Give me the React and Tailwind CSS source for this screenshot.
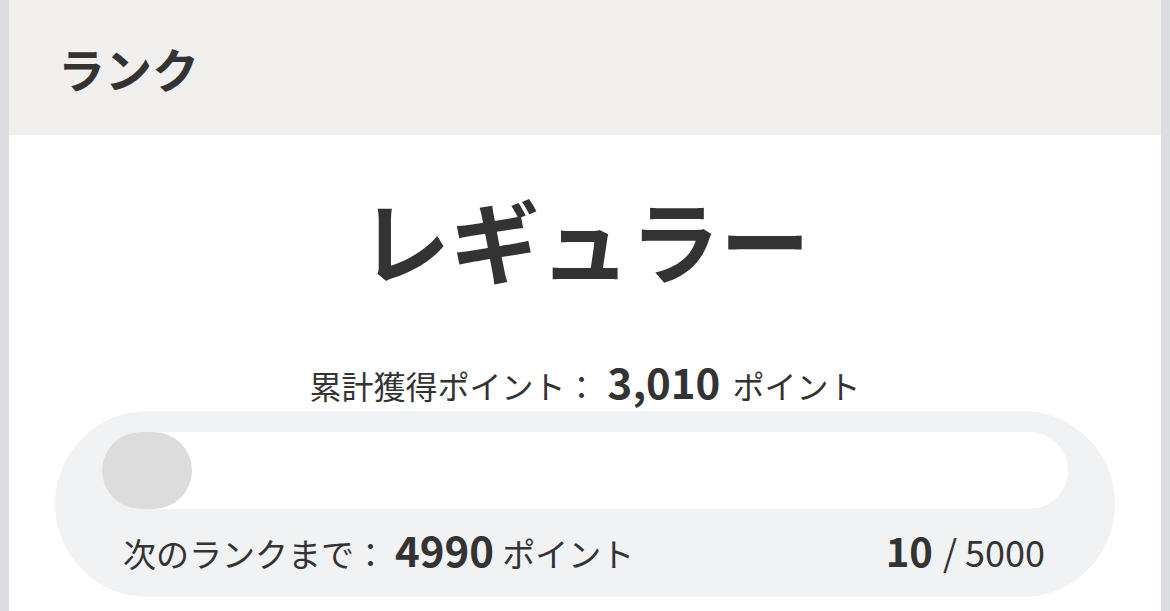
export default function App() {
  const total = 3010;
  const progress = 10;
  const goal = 5000;

  return (
    <div
      className="h-[611px] overflow-hidden bg-[#dcdde1] px-[9px] text-[#333333]"
      style={{ fontFamily: '"Noto Sans CJK JP", "Noto Sans", sans-serif' }}
    >
      <div className="h-full bg-white">
        {/* header */}
        <div className="flex h-[135px] items-center bg-[#f2f0ef] pl-[49px]">
          <h2 className="text-[47px] font-bold leading-none">ランク</h2>
        </div>

        {/* rank name */}
        <div className="pt-[58px] text-center text-[90px] font-bold leading-none">
          レギュラー
        </div>

        {/* total */}
        <div className="mt-[78px] flex items-baseline justify-center text-[32px] leading-[40px]">
          <span>累計獲得ポイント：</span>
          <span className="ml-[10px] text-[42px] font-bold">{total.toLocaleString()}</span>
          <span className="ml-[12px]">ポイント</span>
        </div>

        {/* progress */}
        <div className="mx-[46px] mt-[6px] rounded-full bg-[#f1f2f4] px-[47px] pb-[22px] pt-[21px]">
          <div className="h-[77px] rounded-full bg-white">
            <div
              className="h-full min-w-[90px] rounded-full bg-[#dcdcdc]"
              style={{ width: `${(progress / goal) * 100}%` }}
            />
          </div>
          <div className="mt-[18px] flex items-baseline justify-between pl-[21px] pr-[23px] leading-[44px]">
            <div className="flex items-baseline text-[33px]">
              <span>次のランクまで：</span>
              <span className="ml-[8px] text-[42px] font-bold">{goal - progress}</span>
              <span className="ml-[8px]">ポイント</span>
            </div>
            <div className="flex items-baseline text-[36px]">
              <span className="text-[40px] font-bold">{progress}</span>
              <span className="ml-[10px]">/ {goal}</span>
            </div>
          </div>
        </div>
      </div>
    </div>
  );
}
